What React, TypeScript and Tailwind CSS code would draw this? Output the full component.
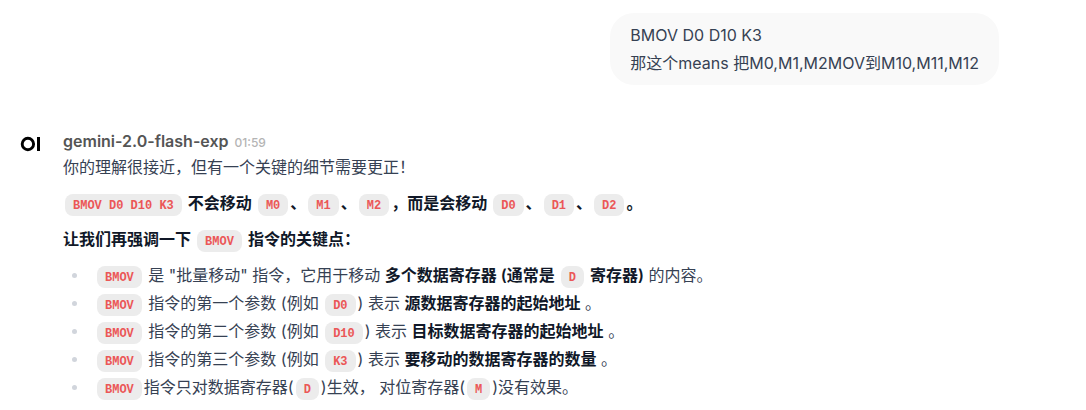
import type { ReactNode } from 'react';

function Code({ children }: { children: ReactNode }) {
  return (
    <code className="mx-0.5 rounded-lg bg-[#ececec] px-2 pt-[5px] pb-[3px] font-['Liberation_Mono',monospace] text-xs font-semibold whitespace-nowrap text-[#eb5757]">
      {children}
    </code>
  );
}

function Strong({ children }: { children: ReactNode }) {
  return <strong className="font-semibold text-gray-900">{children}</strong>;
}

function Item({ children }: { children: ReactNode }) {
  return (
    <li className="flex">
      <span className="flex h-7 w-8 shrink-0 items-center pl-[9px]">
        <span className="size-[5px] rounded-full bg-gray-300" />
      </span>
      <span>{children}</span>
    </li>
  );
}

function Logo() {
  return (
    <svg width="21" height="16" viewBox="0 0 21 16" role="img" aria-label="Open WebUI">
      <circle cx="7.9" cy="8" r="5.7" fill="none" stroke="#000" strokeWidth="2.9" />
      <rect x="17" y="1" width="3" height="14" fill="#000" />
    </svg>
  );
}

export default function App() {
  return (
    <main className="bg-white font-['Inter','Noto_Sans_CJK_SC',sans-serif] text-base/7 text-gray-700">
      <div className="flex justify-end pt-[13px] pr-[87px] pl-5">
        <div className="rounded-3xl bg-[#f9f9f9] px-5 py-2">
          <p>BMOV D0 D10 K3</p>
          <p>那这个means 把M0,M1,M2MOV到M10,M11,M12</p>
        </div>
      </div>

      <article className="mt-11 flex px-5 pb-2">
        <div className="w-[43px] shrink-0 pt-[7px]">
          <Logo />
        </div>
        <div className="min-w-0 flex-1">
          <header className="flex items-baseline gap-1.5 text-base/6">
            <h2 className="font-semibold text-[#555555]">gemini-2.0-flash-exp</h2>
            <time className="text-xs font-medium text-[#b4b4b4]">01:59</time>
          </header>
          <div className="space-y-2">
            <p>你的理解很接近，但有一个关键的细节需要更正！</p>
            <p>
              <Strong>
                <Code>BMOV D0 D10 K3</Code> 不会移动 <Code>M0</Code>、<Code>M1</Code>、<Code>M2</Code>，而是会移动{' '}
                <Code>D0</Code>、<Code>D1</Code>、<Code>D2</Code>。
              </Strong>
            </p>
            <p>
              <Strong>
                让我们再强调一下 <Code>BMOV</Code> 指令的关键点：
              </Strong>
            </p>
            <ul>
              <Item>
                <Code>BMOV</Code> 是 "批量移动" 指令，它用于移动{' '}
                <Strong>
                  多个数据寄存器 (通常是 <Code>D</Code> 寄存器)
                </Strong>{' '}
                的内容。
              </Item>
              <Item>
                <Code>BMOV</Code> 指令的第一个参数 (例如 <Code>D0</Code>) 表示 <Strong>源数据寄存器的起始地址</Strong> 。
              </Item>
              <Item>
                <Code>BMOV</Code> 指令的第二个参数 (例如 <Code>D10</Code>) 表示 <Strong>目标数据寄存器的起始地址</Strong> 。
              </Item>
              <Item>
                <Code>BMOV</Code> 指令的第三个参数 (例如 <Code>K3</Code>) 表示 <Strong>要移动的数据寄存器的数量</Strong> 。
              </Item>
              <Item>
                <Code>BMOV</Code>指令只对数据寄存器(<Code>D</Code>)生效， 对位寄存器(<Code>M</Code>)没有效果。
              </Item>
            </ul>
          </div>
        </div>
      </article>
    </main>
  );
}
